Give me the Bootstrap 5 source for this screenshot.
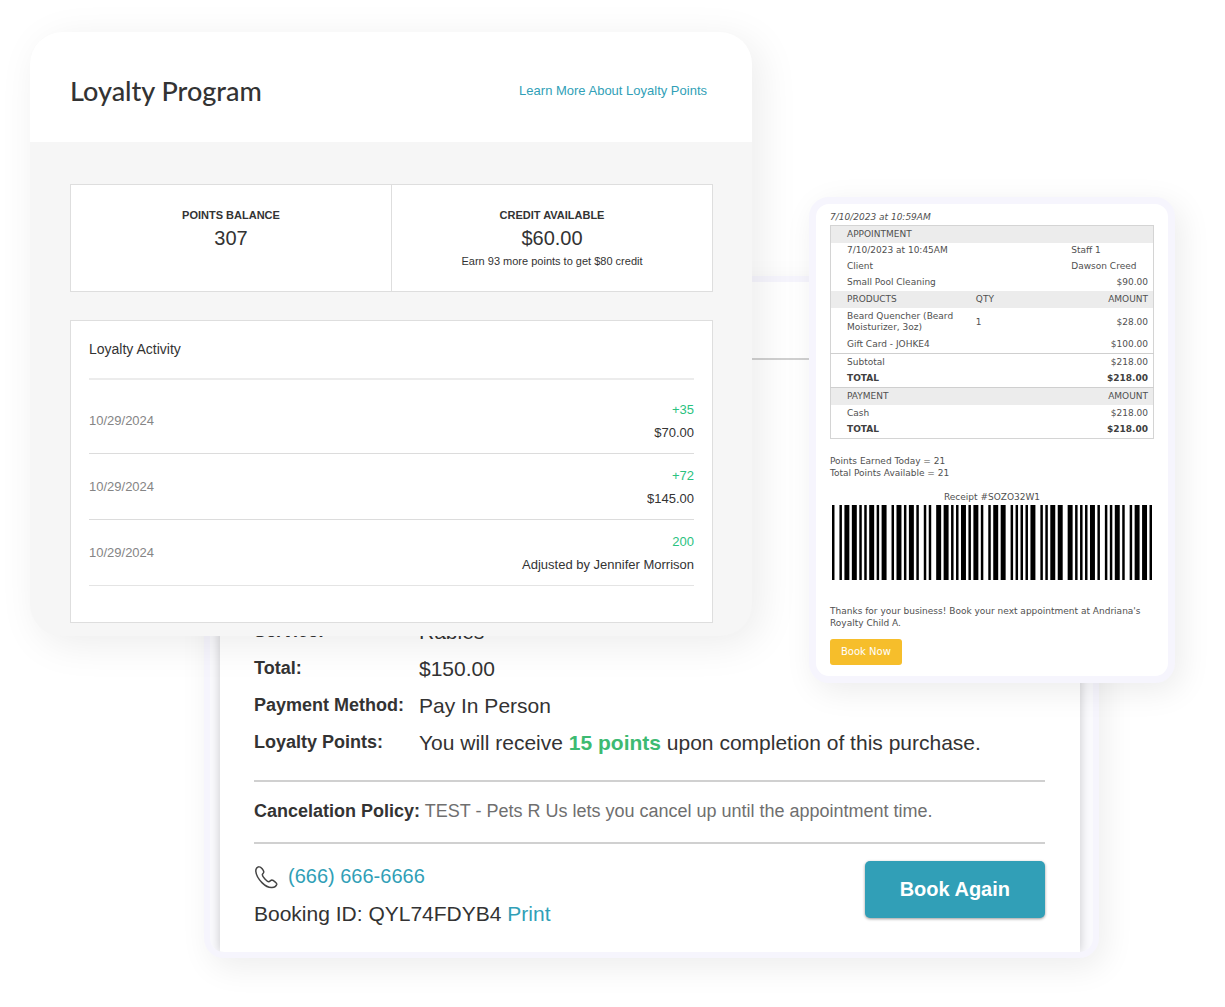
<!DOCTYPE html>
<html lang="en">
<head>
<meta charset="utf-8">
<meta name="viewport" content="width=device-width, initial-scale=1">
<title>Loyalty Program</title>
<link href="https://cdn.jsdelivr.net/npm/bootstrap@5.3.0/dist/css/bootstrap.min.css" rel="stylesheet">
<style>
  body { font-family: "Liberation Sans", Arial, sans-serif; color: #333; background: #fff; }
  a { text-decoration: none; color: #319fb7; }
  a:hover { text-decoration: underline; }

  /* Three overlapping cards share one grid row */
  .stage {
    display: grid; min-height: 100vh; align-items: start;
    grid-template-columns: minmax(0,30fr) minmax(0,174fr) minmax(0,548fr) minmax(0,57fr) minmax(0,290fr) minmax(0,76fr) minmax(0,50fr);
  }
  .booking, .loyalty, .receipt { grid-row: 1; }
  .booking { grid-column: 3 / 6; margin-top: 276px; }
  .loyalty { grid-column: 2 / 4; margin-top: 32px; z-index: 2; }
  .receipt { grid-column: 5 / 7; margin-top: 197px; z-index: 1; }

  /* Loyalty card */
  .loyalty { border-radius: 32px; background: #f6f6f6; overflow: hidden; box-shadow: 8px 8px 40px rgba(0,0,0,.08); }
  .loyalty-head { background: #fff; height: 110px; padding: 8px 45px 0 40px; }
  .loyalty-head h1 { font: 500 27px/32px Lato, sans-serif; color: #333; }
  .loyalty-head a { font-size: 13px; }
  .loyalty-body { padding: 42px 39px 13px 40px; }
  .panel { background: #fff; border: 1px solid #dedede; }
  .stat { height: 106px; padding-top: 20px; }
  .stat + .stat { border-left: 1px solid #dedede; }
  .stat-name { font-size: 11px; line-height: 20px; font-weight: 700; }
  .stat-value { font-size: 20px; line-height: 26px; }
  .stat-note { font-size: 11px; line-height: 20px; }
  .activity { margin-top: 28px; padding: 0 18px 36px; }
  .activity h2 { font-size: 14px; line-height: 57px; border-bottom: 2px solid #ececec; margin-bottom: 8px; }
  .entry { height: 66px; border-bottom: 1px solid #dcdcdc; font-size: 13px; line-height: 23px; }
  .entry:last-child { border-bottom-color: #e4e4e4; }
  .entry time { color: #858585; }
  .gain { color: #2bc27f; }

  /* Receipt card */
  .receipt { border: 7px solid #f6f5fd; border-radius: 20px; background: #fff; padding: 5px 14px 11px; font: 9px/12px "DejaVu Sans", Verdana, sans-serif; color: #505050; box-shadow: 6px 8px 32px rgba(0,0,0,.08); }
  .receipt .stamp { line-height: 16px; }
  .slip { width: 100%; table-layout: fixed; border: 1px solid #d4d4d4; border-collapse: collapse; line-height: 11px; }
  .slip td, .slip th { height: 17px; padding: 0 5px 0 0; font-weight: 400; }
  .slip td:first-child, .slip th:first-child { padding-left: 16px; }
  .slip .amt { text-align: right; }
  .slip .band { background: #ececec; }
  .slip .ruled { border-top: 1px solid #cfcfcf; }
  .slip .who td { height: 16px; }
  .slip .who + .who td { height: 15px; }
  .slip .who td:last-child { padding-left: 5px; }
  .slip .two-line td { height: 29px; }
  .slip .sum td { font-weight: 700; color: #404040; }
  .receipt-no { margin-top: 12px; }
  .barcode { display: block; width: calc(100% - 4px); height: 75px; margin: 2px auto 25px; }
  .btn-now { --bs-btn-bg: #f6be2b; --bs-btn-hover-bg: #e7b01f; --bs-btn-color: #fff; --bs-btn-hover-color: #fff; --bs-btn-padding-x: 11px; --bs-btn-padding-y: 6px; --bs-btn-border-radius: 3px; --bs-btn-border-width: 0; --bs-btn-font-size: 10px; line-height: 14px; font-family: "DejaVu Sans", Verdana, sans-serif; margin-top: 2px; }

  /* Booking card */
  .booking { border: 6px solid #f6f5fd; border-radius: 20px; background: #fafafd; overflow: hidden; box-shadow: 6px 10px 32px rgba(0,0,0,.07); }
  .sheet { margin: 0 13px 0 10px; background: #fff; padding: 76px 35px 20px 34px; box-shadow: 0 0 10px rgba(0,0,0,.2); }
  .sheet hr { margin: 0; border-top: 2px solid #d0d0d0; opacity: 1; }
  .facts { padding-top: 253px; padding-bottom: 19px; }
  .fact { line-height: 37px; }
  .fact dt { width: 165px; font-size: 18px; }
  .fact dd { margin: 0; font-size: 21px; }
  .fact strong { color: #3dba72; }
  .policy { padding: 11px 0 12px; font-size: 18px; line-height: 37px; color: #6f6f6f; }
  .policy strong { color: #333; }
  .contact { font-size: 21px; line-height: 37px; padding-top: 14px; }
  .phone { font-size: 20px; }
  .btn-again { --bs-btn-bg: #319fb7; --bs-btn-hover-bg: #2a8ca2; --bs-btn-color: #fff; --bs-btn-hover-color: #fff; --bs-btn-padding-x: 35px; --bs-btn-padding-y: 12px; --bs-btn-border-radius: 5px; --bs-btn-border-width: 0; --bs-btn-font-size: 20px; --bs-btn-font-weight: 700; line-height: 33px; margin-top: 3px; box-shadow: 0 1px 3px rgba(0,0,0,.4); }

  @media (max-width: 900px) {
    .stage { display: block; padding: 16px; }
    .booking, .loyalty, .receipt { margin-top: 16px; }
    .sheet, .facts { padding-top: 20px; }
  }
</style>
</head>
<body>
<main class="stage">

  <section class="loyalty">
    <header class="loyalty-head d-flex justify-content-between align-items-center">
      <h1 class="m-0">Loyalty Program</h1>
      <a href="#">Learn More About Loyalty Points</a>
    </header>
    <div class="loyalty-body">
      <div class="panel row g-0 text-center">
        <div class="col stat">
          <div class="stat-name">POINTS BALANCE</div>
          <div class="stat-value">307</div>
        </div>
        <div class="col stat">
          <div class="stat-name">CREDIT AVAILABLE</div>
          <div class="stat-value">$60.00</div>
          <div class="stat-note">Earn 93 more points to get $80 credit</div>
        </div>
      </div>
      <div class="panel activity">
        <h2>Loyalty Activity</h2>
        <ul class="list-unstyled m-0">
          <li class="entry d-flex justify-content-between align-items-center">
            <time datetime="2024-10-29">10/29/2024</time>
            <div class="text-end"><div class="gain">+35</div><div>$70.00</div></div>
          </li>
          <li class="entry d-flex justify-content-between align-items-center">
            <time datetime="2024-10-29">10/29/2024</time>
            <div class="text-end"><div class="gain">+72</div><div>$145.00</div></div>
          </li>
          <li class="entry d-flex justify-content-between align-items-center">
            <time datetime="2024-10-29">10/29/2024</time>
            <div class="text-end"><div class="gain">200</div><div>Adjusted by Jennifer Morrison</div></div>
          </li>
        </ul>
      </div>
    </div>
  </section>

  <section class="receipt">
    <div class="stamp fst-italic">7/10/2023 at 10:59AM</div>
    <table class="slip">
      <colgroup><col style="width:45%"><col style="width:28%"><col style="width:27%"></colgroup>
      <tbody>
        <tr class="band"><th colspan="3">APPOINTMENT</th></tr>
        <tr class="who"><td colspan="2">7/10/2023 at 10:45AM</td><td>Staff 1</td></tr>
        <tr class="who"><td colspan="2">Client</td><td>Dawson Creed</td></tr>
        <tr><td colspan="2">Small Pool Cleaning</td><td class="amt">$90.00</td></tr>
      </tbody>
      <tbody>
        <tr class="band"><th>PRODUCTS</th><th>QTY</th><th class="amt">AMOUNT</th></tr>
        <tr class="two-line"><td>Beard Quencher (Beard Moisturizer, 3oz)</td><td>1</td><td class="amt">$28.00</td></tr>
        <tr><td>Gift Card - JOHKE4</td><td></td><td class="amt">$100.00</td></tr>
      </tbody>
      <tbody>
        <tr class="ruled"><td colspan="2">Subtotal</td><td class="amt">$218.00</td></tr>
        <tr class="sum"><td colspan="2">TOTAL</td><td class="amt">$218.00</td></tr>
      </tbody>
      <tbody>
        <tr class="band ruled"><th colspan="2">PAYMENT</th><th class="amt">AMOUNT</th></tr>
        <tr><td colspan="2">Cash</td><td class="amt">$218.00</td></tr>
        <tr class="sum"><td colspan="2">TOTAL</td><td class="amt">$218.00</td></tr>
      </tbody>
    </table>
    <div class="mt-3">Points Earned Today = 21<br>Total Points Available = 21</div>
    <div class="receipt-no text-center">Receipt #SOZO32W1</div>
    <svg class="barcode" id="barcode" viewBox="0 0 129 10" preserveAspectRatio="none" role="img" aria-label="Receipt barcode"></svg>
    <p class="mb-2">Thanks for your business! Book your next appointment at Andriana's Royalty Child A.</p>
    <button type="button" class="btn btn-now">Book Now</button>
  </section>

  <section class="booking">
    <div class="sheet">
      <hr>
      <dl class="facts m-0">
        <div class="fact d-flex"><dt>Service:</dt><dd>Rabies</dd></div>
        <div class="fact d-flex"><dt>Total:</dt><dd>$150.00</dd></div>
        <div class="fact d-flex"><dt>Payment Method:</dt><dd>Pay In Person</dd></div>
        <div class="fact d-flex"><dt>Loyalty Points:</dt><dd>You will receive <strong>15 points</strong> upon completion of this purchase.</dd></div>
      </dl>
      <hr>
      <p class="policy m-0"><strong>Cancelation Policy:</strong> TEST - Pets R Us lets you cancel up until the appointment time.</p>
      <hr>
      <div class="contact d-flex justify-content-between align-items-start">
        <div>
          <div class="phone d-flex align-items-center">
            <svg class="me-2" width="26" height="26" viewBox="0 0 26 26" fill="none" stroke="#444" stroke-width="1.5" stroke-linejoin="round" aria-hidden="true"><path d="M5.400 2.700C3.200 2.500 1.600 4.700 1.800 7.300c.3 3.700 3.100 8.300 6.400 11.600 3.300 3.200 6.800 4.900 9.800 4.600 2.200-.2 4.300-1.600 4.800-3.300.2-1-3.300-4-4.900-4.100-1.300 0-1.900 1.500-3.200 1.600-1.500 0-6.400-5.200-6.400-6.900 0-1.100 1.600-1.600 1.500-2.900C9.700 6.300 7 2.800 5.400 2.700Z"/></svg>
            <a href="#">(666) 666-6666</a>
          </div>
          <div>Booking ID: QYL74FDYB4 <a href="#">Print</a></div>
        </div>
        <button type="button" class="btn btn-again">Book Again</button>
      </div>
    </div>
  </section>

</main>
<script src="https://cdn.jsdelivr.net/npm/bootstrap@5.3.0/dist/js/bootstrap.bundle.min.js"></script>
<script>
  // Code 39: nine elements per character, bars and spaces alternating, n = 1 unit, w = 2 units
  const code39 = { '*': 'nwnnwnwnn', S: 'nnwnnnwwn', O: 'wnnnwnnwn', Z: 'nwwnwnnnn', 3: 'wnwwnnnnn', 2: 'nnwwnnnnw', W: 'wwwnnnnnn', 1: 'wnnwnnnnw' };
  let x = 0, d = '';
  for (const ch of '*SOZO32W1*') {
    [...code39[ch]].forEach((e, i) => {
      const w = e === 'w' ? 2 : 1;
      if (i % 2 === 0) d += `M${x} 0h${w}v10h-${w}z`;
      x += w;
    });
    x += 1;
  }
  document.getElementById('barcode').innerHTML = `<path d="${d}"/>`;
</script>
</body>
</html>
